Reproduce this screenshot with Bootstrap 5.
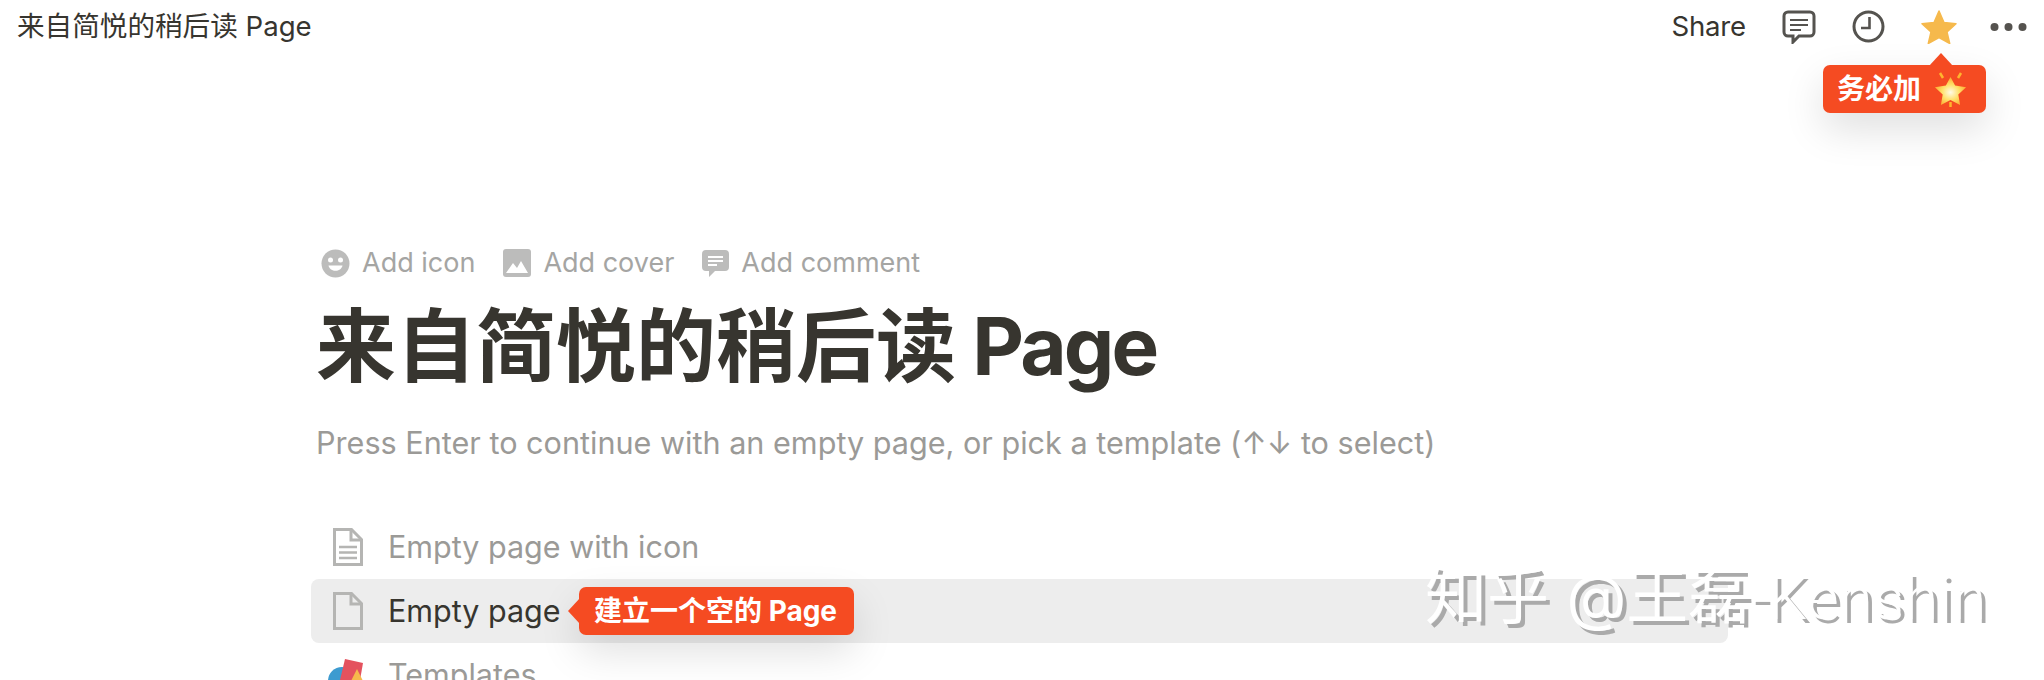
<!DOCTYPE html>
<html lang="zh-CN">
<head>
  <meta charset="UTF-8">
  <title>来自简悦的稍后读 Page</title>
  <link href="https://cdn.jsdelivr.net/npm/bootstrap@5.3.3/dist/css/bootstrap.min.css" rel="stylesheet">
  <style>
    html, body {
      height: 680px;
      overflow: hidden;
    }

    body {
      font-family: Inter, "Noto Sans CJK SC", sans-serif;
      background: #fff;
      color: #37352f;
      position: relative;
    }

    .top-bar {
      height: 54px;
      padding: 0 17px;
      font-size: 27.6px;
    }

    .top-share {
      margin-right: 36px;
      letter-spacing: -.2px;
    }

    .top-icons {
      gap: 36px;
    }

    .top-dots {
      margin-left: -3px;
    }

    .page-body {
      padding: 188px 0 0 316px;
    }

    .add-row {
      height: 42px;
      padding-left: 5px;
      font-size: 27px;
      color: #a5a5a3;
    }

    .add-item {
      margin-right: 28px;
      gap: 12px;
    }

    .page-heading {
      font-size: 80px;
      line-height: 110px;
      font-weight: 700;
      margin: 7px 0 0 0;
      color: #37352f;
      white-space: nowrap;
    }

    .heading-latin {
      letter-spacing: -2.8px;
    }

    .page-hint {
      font-size: 30.6px;
      line-height: 40px;
      color: #9b9a97;
      margin: 22px 0 0 0;
      white-space: nowrap;
    }

    .tpl-list {
      margin: 52px 0 0 -5px;
      width: 1417px;
    }

    .tpl-row {
      height: 64px;
      font-size: 30.5px;
      color: #9b9a97;
      border-radius: 8px;
      padding-left: 22px;
      gap: 25px;
    }

    .tpl-row svg {
      flex: none;
    }

    .tpl-row.is-active {
      background: #ededed;
      color: #37352f;
    }

    .tpl-gallery {
      margin-left: -5px;
    }

    .tip-flag {
      position: absolute;
      background: #f54b22;
      color: #fff;
      font-weight: 700;
      font-size: 28px;
      height: 48px;
      border-radius: 7px;
      box-shadow: 0 16px 40px rgba(0, 0, 0, .13);
      white-space: nowrap;
    }

    .tip-flag::before {
      content: "";
      position: absolute;
      background: #f54b22;
    }

    .tip-must {
      left: 1823px;
      top: 65px;
      width: 163px;
      padding-left: 14px;
      gap: 13px;
    }

    .tip-must::before {
      left: 106px;
      top: -12px;
      width: 24px;
      height: 13px;
      clip-path: polygon(50% 0, 100% 100%, 0 100%);
    }

    .tip-empty {
      left: 579px;
      top: 587px;
      width: 275px;
      padding-left: 15px;
    }

    .tip-empty::before {
      left: -11px;
      top: 11px;
      width: 12px;
      height: 26px;
      clip-path: polygon(0 50%, 100% 0, 100% 100%);
    }

    .zh-mark {
      position: absolute;
      left: 1425px;
      top: 557px;
      font-size: 62px;
      line-height: 80px;
      font-weight: 400;
      color: #fff;
      text-shadow: 4px 4px 0 #aaa;
      white-space: nowrap;
    }

    .mark-latin {
      font-family: Roboto, sans-serif;
      font-weight: 300;
    }
  </style>
</head>
<body>

  <div class="top-bar d-flex align-items-center justify-content-between">
    <div>来自简悦的稍后读 Page</div>
    <div class="d-flex align-items-center">
      <span class="top-share">Share</span>
      <div class="top-icons d-flex align-items-center">
        <svg width="34" height="34" viewBox="0 0 34 34" fill="none" stroke="#55534f" stroke-width="3">
          <path d="M6 2h22a4 4 0 0 1 4 4v16a4 4 0 0 1-4 4H17l-6 6v-6H6a4 4 0 0 1-4-4V6a4 4 0 0 1 4-4z"/>
          <path d="M8 10h18M8 15h18M8 20h11" stroke-width="2"/>
        </svg>
        <svg width="33" height="33" viewBox="0 0 33 33" fill="none" stroke="#55534f" stroke-width="3">
          <circle cx="16.5" cy="16.5" r="14.5"/>
          <path d="M17.5 7v11H9" stroke-width="2.6"/>
        </svg>
        <svg width="36" height="34" viewBox="0 0 36 34">
          <path d="M18 1l5 11.5 12 1.200-9 8.200 2.700 11.600L18 27.600 7.300 33.500 10 21.900 1 13.700l12-1.200z" fill="#f6b94c" stroke="#f6b94c" stroke-width="1.500" stroke-linejoin="round"/>
        </svg>
        <svg class="top-dots" width="37" height="10" viewBox="0 0 37 10" fill="#55534f">
          <circle cx="4.500" cy="5" r="4"/>
          <circle cx="18.500" cy="5" r="4"/>
          <circle cx="32.500" cy="5" r="4"/>
        </svg>
      </div>
    </div>
  </div>

  <div class="page-body">
    <div class="add-row d-flex align-items-center">
      <div class="add-item d-flex align-items-center">
        <svg width="29" height="29" viewBox="0 0 29 29">
          <circle cx="14.500" cy="14.500" r="14" fill="#bcbcbb"/>
          <circle cx="9.500" cy="11" r="2.500" fill="#fff"/>
          <circle cx="19.500" cy="11" r="2.500" fill="#fff"/>
          <path d="M7.500 16.500c1.500 7 12.500 7 14 0z" fill="#fff"/>
        </svg>
        <span>Add icon</span>
      </div>
      <div class="add-item d-flex align-items-center">
        <svg width="28" height="28" viewBox="0 0 28 28">
          <rect width="28" height="28" rx="3" fill="#bcbcbb"/>
          <path d="M3 24l7-10 4 5 4-7 7 12z" fill="#fff"/>
        </svg>
        <span>Add cover</span>
      </div>
      <div class="add-item d-flex align-items-center">
        <svg width="27" height="27" viewBox="0 0 27 27">
          <path d="M4 0h19a4 4 0 0 1 4 4v13a4 4 0 0 1-4 4H13l-6 6v-6H4a4 4 0 0 1-4-4V4a4 4 0 0 1 4-4z" fill="#bcbcbb"/>
          <path d="M6 7h15M6 11h15M6 15h9" stroke="#fff" stroke-width="2"/>
        </svg>
        <span>Add comment</span>
      </div>
    </div>

    <h1 class="page-heading">来自简悦的稍后读<span class="heading-latin"> Page</span></h1>

    <p class="page-hint">Press Enter to continue with an empty page, or pick a template (↑↓ to select)</p>

    <div class="tpl-list">
      <div class="tpl-row d-flex align-items-center">
        <svg width="30" height="38" viewBox="0 0 30 38" fill="none" stroke="#b5b5b3" stroke-width="3">
          <path d="M1.500 1.500h17l10 10v25h-27z"/>
          <path d="M18 2v10h10"/>
          <path d="M6 19h18M6 24.500h18M6 30h18" stroke-width="2.500"/>
        </svg>
        <span>Empty page with icon</span>
      </div>
      <div class="tpl-row is-active d-flex align-items-center">
        <svg width="30" height="38" viewBox="0 0 30 38" fill="none" stroke="#b5b5b3" stroke-width="3">
          <path d="M1.500 1.500h17l10 10v25h-27z"/>
          <path d="M18 2v10h10"/>
        </svg>
        <span>Empty page</span>
      </div>
      <div class="tpl-row d-flex align-items-center">
        <svg class="tpl-gallery" width="35" height="38" viewBox="0 0 35 38">
          <circle cx="14" cy="25" r="14" fill="#3d9bd0"/>
          <path d="M17 3l18 4-4 23-19-6z" fill="#e4525e"/>
          <path d="M29 13l12 24H17z" fill="#f6b94c"/>
        </svg>
        <span>Templates</span>
      </div>
    </div>
  </div>

  <div class="tip-flag tip-must d-flex align-items-center">
    <span>务必加</span>
    <svg width="33" height="35" viewBox="0 0 33 35">
      <defs>
        <radialGradient id="starGlow" cx="50%" cy="55%" r="55%">
          <stop offset="0" stop-color="#fffbe6"/>
          <stop offset=".5" stop-color="#ffe06a"/>
          <stop offset="1" stop-color="#fca62c"/>
        </radialGradient>
      </defs>
      <path d="M16.500 5l4.600 8.400 11 1.800-7.800 7.300 1.800 10.500-9.600-5-9.600 5 1.800-10.500L.900 15.200l11-1.800z" fill="url(#starGlow)"/>
      <path d="M6 1l3 5M27 1l-3 5M16.500 30v5" stroke="#ffb52e" stroke-width="2.500"/>
    </svg>
  </div>

  <div class="tip-flag tip-empty d-flex align-items-center">建立一个空的 Page</div>

  <div class="zh-mark">知乎 @王磊<span class="mark-latin">-Kenshin</span></div>

  <script src="https://cdn.jsdelivr.net/npm/bootstrap@5.3.3/dist/js/bootstrap.bundle.min.js"></script>
</body>
</html>
